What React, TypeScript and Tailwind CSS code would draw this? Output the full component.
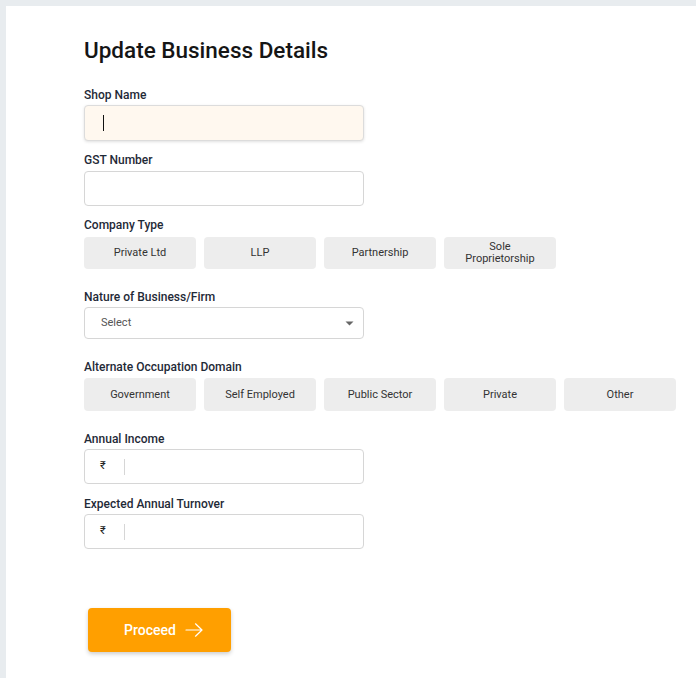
const companyTypes = ["Private Ltd", "LLP", "Partnership", "Sole Proprietorship"];
const domains = ["Government", "Self Employed", "Public Sector", "Private", "Other"];

function Label({ children, className = "" }: { children: React.ReactNode; className?: string }) {
  return (
    <p className={`text-[12px] leading-[16px] font-medium text-[#1f2a37] ${className}`}>
      {children}
    </p>
  );
}

function Chip({ label }: { label: string }) {
  return (
    <button
      type="button"
      className="w-[112px] rounded-[4px] bg-[#ededed] px-2 text-[11px] leading-[12px] text-[#333] flex items-center justify-center text-center"
    >
      {label === "Sole Proprietorship" ? (
        <span>
          Sole
          <br />
          Proprietorship
        </span>
      ) : (
        label
      )}
    </button>
  );
}

function RupeeInput() {
  return (
    <div className="flex h-[35px] w-[280px] items-center rounded-[4px] border border-[#d6d6d6] bg-white">
      <span className="w-[39px] pl-[15px] text-[11px] text-[#222]">₹</span>
      <span className="h-[16px] w-px bg-[#d6d6d6]" />
    </div>
  );
}

export default function App() {
  return (
    <div
      className="min-h-[678px] bg-[#e8ecef] pt-[6px] pl-[6px]"
      style={{ fontFamily: "Roboto, 'Liberation Sans', sans-serif" }}
    >
      <div className="min-h-[672px] bg-white pl-[78px] pt-[30px]">
        <h1 className="text-[22.5px] leading-[28px] font-medium text-[#151515]">
          Update Business Details
        </h1>

        <Label className="mt-[23px] mb-[2px]">Shop Name</Label>
        <div className="flex h-[36px] w-[280px] items-center rounded-[4px] border border-[#dcdcdc] bg-[#fff8ef] pl-[18px] shadow-[0_1px_3px_rgba(0,0,0,0.12)]">
          <span className="h-[16px] w-px bg-[#111]" />
        </div>

        <Label className="mt-[11px] mb-[3px]">GST Number</Label>
        <div className="h-[35px] w-[280px] rounded-[4px] border border-[#d6d6d6] bg-white" />

        <Label className="mt-[11px] mb-[4px]">Company Type</Label>
        <div className="flex h-[32px] gap-2">
          {companyTypes.map((t) => (
            <Chip key={t} label={t} />
          ))}
        </div>

        <Label className="mt-[20px] mb-[2px]">Nature of Business/Firm</Label>
        <div className="flex h-[32px] w-[280px] items-center justify-between rounded-[4px] border border-[#d6d6d6] bg-white pl-[16px] pr-[9px]">
          <span className="text-[11px] text-[#555]">Select</span>
          <svg width="9" height="5" viewBox="0 0 9 5">
            <path d="M0.5 0.5h8L4.5 4.5z" fill="#666" />
          </svg>
        </div>

        <Label className="mt-[20px] mb-[3px]">Alternate Occupation Domain</Label>
        <div className="flex h-[33px] gap-2">
          {domains.map((d) => (
            <Chip key={d} label={d} />
          ))}
        </div>

        <Label className="mt-[20px] mb-[2px]">Annual Income</Label>
        <RupeeInput />

        <Label className="mt-[12px] mb-[2px]">Expected Annual Turnover</Label>
        <RupeeInput />

        <button
          type="button"
          className="mt-[59px] ml-[4px] flex h-[44px] w-[143px] items-center justify-center gap-[9px] rounded-[4px] bg-[#ff9f00] pl-[8px] text-[14px] font-medium text-white shadow-[0_2px_4px_rgba(0,0,0,0.2)]"
        >
          Proceed
          <svg width="18" height="14" viewBox="0 0 18 14" fill="none" stroke="currentColor" strokeWidth="1.2" strokeLinecap="round" strokeLinejoin="round">
            <path d="M1 7h16M10.5 0.8L17 7l-6.5 6.2" />
          </svg>
        </button>
      </div>
    </div>
  );
}
